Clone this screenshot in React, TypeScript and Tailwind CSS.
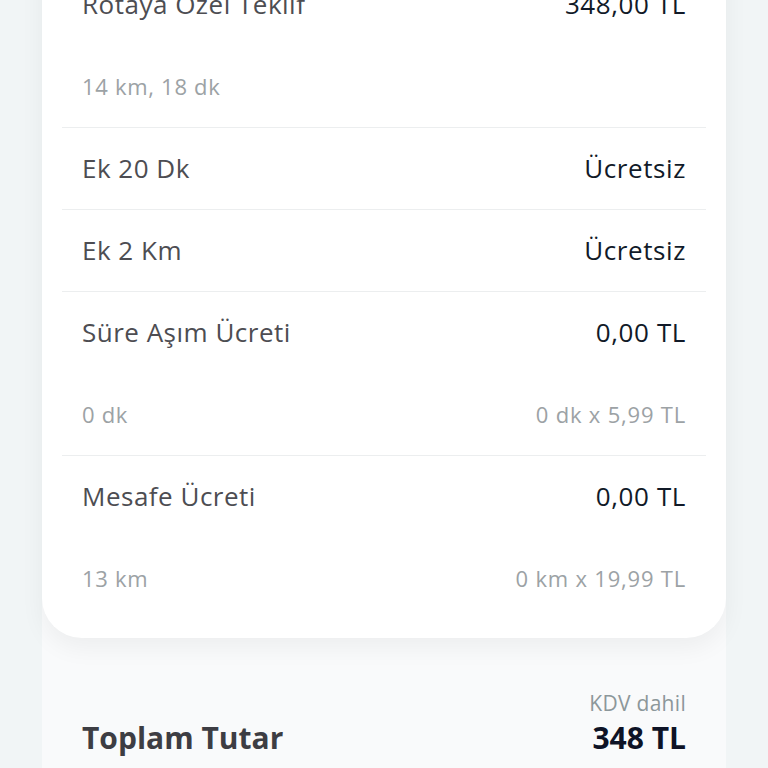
import React from 'react';

type Row = {
  title: string;
  value: string;
  sub?: string;
  subValue?: string;
};

const rows: Row[] = [
  { title: 'Ek 20 Dk', value: 'Ücretsiz' },
  { title: 'Ek 2 Km', value: 'Ücretsiz' },
  { title: 'Süre Aşım Ücreti', value: '0,00 TL', sub: '0 dk', subValue: '0 dk x 5,99 TL' },
  { title: 'Mesafe Ücreti', value: '0,00 TL', sub: '13 km', subValue: '0 km x 19,99 TL' },
];

function FeeRow({ title, value, sub, subValue }: Row) {
  return (
    <div className="border-t border-[#eceeef] px-5">
      <div className="h-[81px] flex items-center justify-between">
        <span className="text-[26px] tracking-[0.5px] text-[#4d4d52]">{title}</span>
        <span className="text-[26px] tracking-[0.6px] text-[#111a28]">{value}</span>
      </div>
      {sub && (
        <div className="h-[82px] flex items-center justify-between">
          <span className="text-[22px] tracking-[0.7px] text-[#9ca2a5]">{sub}</span>
          <span className="text-[22px] tracking-[0.8px] text-[#9ca2a5]">{subValue}</span>
        </div>
      )}
    </div>
  );
}

export default function App() {
  return (
    <main
      className="h-[768px] w-full overflow-hidden bg-[#f1f5f6] flex justify-center"
      style={{ fontFamily: '"Open Sans", "Noto Sans", sans-serif' }}
    >
      <div className="w-[684px] h-full bg-[#f9fafb] flex flex-col">
        <section className="bg-white rounded-b-[40px] px-5 pb-[19px] shadow-[0_10px_24px_rgba(0,0,0,0.05)] -mt-[37px]">
          <div className="px-5">
            <div className="h-[82px] flex items-center justify-between">
              <span className="text-[26px] tracking-[0.5px] text-[#4d4d52]">Rotaya Özel Teklif</span>
              <span className="text-[26px] tracking-[0.6px] text-[#111a28]">348,00 TL</span>
            </div>
            <div className="h-[82px] flex items-center">
              <span className="text-[22px] tracking-[0.7px] text-[#9ca2a5]">14 km, 18 dk</span>
            </div>
          </div>
          {rows.map((r) => (
            <FeeRow key={r.title} {...r} />
          ))}
        </section>

        <section className="px-10 pt-[55px] flex items-end justify-between">
          <span className="text-[30px] font-bold text-[#3d3d43] leading-none pb-[2px]">Toplam Tutar</span>
          <div className="flex flex-col items-end">
            <span className="text-[21px] tracking-[0.3px] text-[#8c979a] leading-none">KDV dahil</span>
            <span className="text-[30px] font-bold text-[#0e1326] leading-none mt-[9px] pb-[2px]">348 TL</span>
          </div>
        </section>
      </div>
    </main>
  );
}
